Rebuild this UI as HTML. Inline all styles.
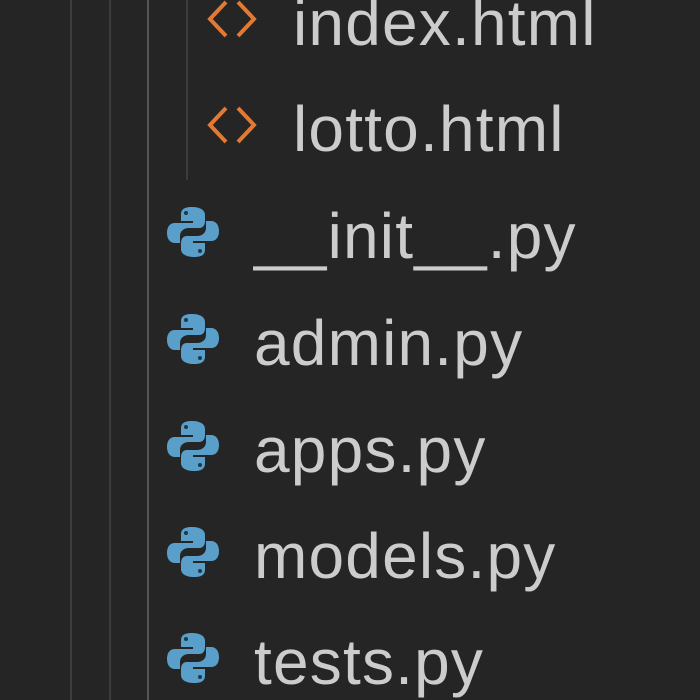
<!DOCTYPE html>
<html><head><style>
body{margin:0;width:700px;height:700px;background:#252526;overflow:hidden;position:relative;font-family:"Liberation Sans",sans-serif}
.l{position:absolute;top:0;width:2px;background:#3c3c3c}
.t{position:absolute;color:#cccccc;font-size:64px;letter-spacing:1.2px;line-height:1;white-space:nowrap}
.i{position:absolute}
</style></head><body>
<div class="l" style="left:70px;height:700px"></div>
<div class="l" style="left:109px;height:700px"></div>
<div class="l" style="left:147px;height:700px;background:#555"></div>
<div class="l" style="left:186px;height:180px"></div>

<svg class="i" style="left:206px;top:-2px" width="52" height="42" viewBox="0 0 52 42"><path d="M20 4 L4 21 L20 38 M32 4 L48 21 L32 38" stroke="#e37933" stroke-width="4" fill="none"/></svg>
<div class="t" style="left:293px;top:-9px">index.html</div>
<svg class="i" style="left:206px;top:104px" width="52" height="42" viewBox="0 0 52 42"><path d="M20 4 L4 21 L20 38 M32 4 L48 21 L32 38" stroke="#e37933" stroke-width="4" fill="none"/></svg>
<div class="t" style="left:293px;top:97px">lotto.html</div>

<svg width="0" height="0" style="position:absolute"><defs><g id="py"><path d="M26 2 C16 2 15 6 15 10 L15 16 L27 16 L27 18 L9 18 C3 18 1 23 1 28 C1 34 4 38 9 38 L14 38 L14 31 C14 26 18 23 23 23 L33 23 C37 23 39 20 39 16 L39 10 C39 5 34 2 26 2 Z" fill="#5a9fc9"/><path d="M28 52 C38 52 39 48 39 44 L39 38 L27 38 L27 36 L45 36 C51 36 53 31 53 26 C53 20 50 16 45 16 L40 16 L40 23 C40 28 36 31 31 31 L21 31 C17 31 15 34 15 38 L15 44 C15 49 20 52 28 52 Z" fill="#5a9fc9"/><circle cx="20" cy="8" r="2" fill="#1b3a4a"/><circle cx="34" cy="46" r="2" fill="#1b3a4a"/></g></defs></svg>

<svg class="i" style="left:166px;top:205px" width="54" height="54"><use href="#py"/></svg>
<div class="t" style="left:254px;top:204px">__init__.py</div>
<svg class="i" style="left:166px;top:312px" width="54" height="54"><use href="#py"/></svg>
<div class="t" style="left:254px;top:311px">admin.py</div>
<svg class="i" style="left:166px;top:419px" width="54" height="54"><use href="#py"/></svg>
<div class="t" style="left:254px;top:418px">apps.py</div>
<svg class="i" style="left:166px;top:525px" width="54" height="54"><use href="#py"/></svg>
<div class="t" style="left:254px;top:524px">models.py</div>
<svg class="i" style="left:166px;top:631px" width="54" height="54"><use href="#py"/></svg>
<div class="t" style="left:254px;top:630px">tests.py</div>
</body></html>
